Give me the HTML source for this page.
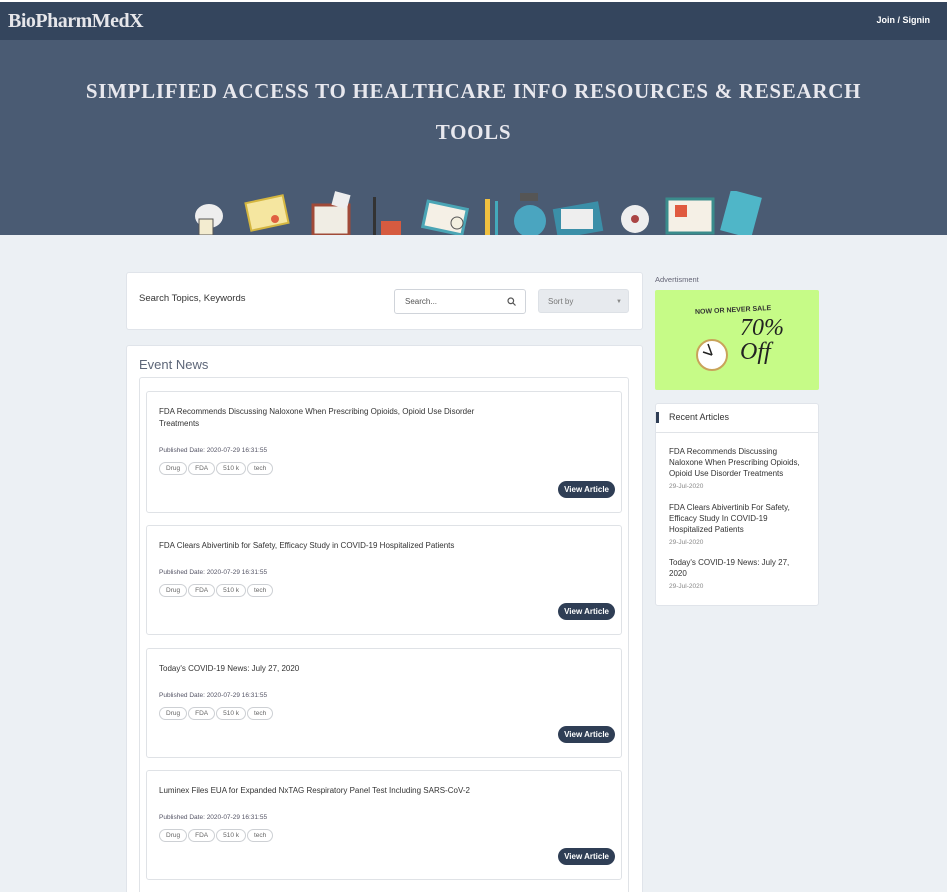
<!DOCTYPE html>
<html><head><meta charset="utf-8"><style>
*{box-sizing:border-box;margin:0;padding:0}
html,body{width:947px;height:892px;overflow:hidden}
body{background:#ecf0f4;font-family:"Liberation Sans",sans-serif;position:relative}
.top{position:absolute;left:0;top:0;width:947px;height:2px;background:#fff}
.nav{position:absolute;left:0;top:2px;width:947px;height:38px;background:#34455d}
.logo{position:absolute;left:8px;top:8px;font-family:"Liberation Serif",serif;font-size:20px;font-weight:bold;color:#e6e6ea;letter-spacing:-0.5px}
.join{position:absolute;right:17px;top:13px;font-size:9px;font-weight:bold;color:#fff}
.hero{position:absolute;left:0;top:40px;width:947px;height:195px;background:#4a5b73}
.ht{position:absolute;left:0;width:947px;text-align:center;font-family:"Liberation Serif",serif;font-weight:bold;font-size:21px;color:#e8e8ee;letter-spacing:0.7px}
.card{position:absolute;background:#fff;border:1px solid #e0e4ea;border-radius:3px}
.sbox{position:absolute;left:394px;top:289px;width:132px;height:25px;border:1px solid #d0d4da;border-radius:3px;background:#fff;font-size:8px;color:#555;padding:7px 10px;line-height:9px}
.sort{position:absolute;left:538px;top:289px;width:91px;height:24px;background:#e7eaee;border:1px solid #dde1e6;border-radius:3px;font-size:8px;color:#777;padding:7px 9px;line-height:9px}
.item{position:absolute;left:146px;width:476px;border:1px solid #dfe2e6;border-radius:3px;background:#fff}
.it{position:absolute;left:12px;top:14px;font-size:8px;color:#333;line-height:12px;width:340px}
.pd{position:absolute;left:12px;font-size:6.5px;color:#556;line-height:8px}
.tags{position:absolute;left:12px;line-height:0}
.tag{display:inline-block;height:13px;border:1px solid #cdd0d4;border-radius:7px;font-size:6.5px;color:#666;padding:0 6px;margin-right:1px;line-height:11px}
.btn{position:absolute;right:6px;background:#2f3e55;color:#fff;font-size:8px;font-weight:bold;border-radius:9px;padding:0 6px;height:17px;line-height:17px}
.ra{position:absolute;left:669px;font-size:8px;color:#333;line-height:11px;width:140px}
.rd{font-size:6.5px;color:#888;margin-top:3px;line-height:9px}
</style></head><body>
<div class="top"></div>
<div class="nav"><div class="logo">BioPharmMedX</div><div class="join">Join / Signin</div></div>
<div class="hero">
<div class="ht" style="top:39px">SIMPLIFIED ACCESS TO HEALTHCARE INFO RESOURCES &amp; RESEARCH</div>
<div class="ht" style="top:80px">TOOLS</div>
<svg style="position:absolute;left:185px;top:151px" width="580" height="44">
<ellipse cx="24" cy="25" rx="14" ry="12" fill="#eee"/><rect x="14" y="28" width="14" height="16" fill="#f3ecd0" stroke="#555"/>
<rect x="63" y="8" width="38" height="28" fill="#f5e6a0" stroke="#d4b640" stroke-width="2" transform="rotate(-12 82 22)"/><circle cx="90" cy="28" r="4" fill="#e06040"/>
<rect x="128" y="14" width="36" height="30" fill="#f0ede4" stroke="#a04a38" stroke-width="3"/><rect x="148" y="2" width="16" height="14" fill="#eee" transform="rotate(15 156 9)"/>
<rect x="196" y="30" width="20" height="14" fill="#d65b40"/><rect x="188" y="6" width="3" height="38" fill="#333"/>
<rect x="240" y="14" width="40" height="26" fill="#f5f0e6" stroke="#4aa5b5" stroke-width="3" transform="rotate(12 260 27)"/><circle cx="272" cy="32" r="6" fill="#f4f0e0" stroke="#555"/>
<rect x="300" y="8" width="5" height="36" fill="#f0c040"/><rect x="310" y="10" width="3" height="34" fill="#4ab"/>
<circle cx="345" cy="30" r="16" fill="#4aa5c0"/><rect x="335" y="2" width="18" height="8" fill="#555"/>
<rect x="370" y="14" width="46" height="30" fill="#3b8fa8" transform="rotate(-10 393 29)"/><rect x="376" y="18" width="32" height="20" fill="#eee"/>
<circle cx="450" cy="28" r="14" fill="#eee"/><circle cx="450" cy="28" r="4" fill="#a44"/>
<rect x="482" y="8" width="46" height="34" fill="#f5f0e6" stroke="#3a8c8c" stroke-width="3"/><rect x="490" y="14" width="12" height="12" fill="#e05a40"/>
<rect x="540" y="2" width="32" height="42" fill="#4fb6c8" transform="rotate(15 556 23)"/>
</svg>
</div>

<div class="card" style="left:126px;top:272px;width:517px;height:58px"></div>
<div style="position:absolute;left:139px;top:293px;font-size:9.5px;color:#333">Search Topics, Keywords</div>
<div class="sbox">Search...<svg style="position:absolute;right:9px;top:7px" width="9" height="9"><circle cx="3.8" cy="3.8" r="2.8" fill="none" stroke="#555" stroke-width="1.2"/><line x1="6" y1="6" x2="8.5" y2="8.5" stroke="#555" stroke-width="1.2"/></svg></div>
<div class="sort">Sort by<span style="position:absolute;right:6px;top:8px;font-size:6px;color:#888">▼</span></div>

<div class="card" style="left:126px;top:345px;width:517px;height:560px"></div>
<div style="position:absolute;left:139px;top:357px;font-size:13px;color:#5d6678">Event News</div>
<div style="position:absolute;left:139px;top:377px;width:490px;height:530px;border:1px solid #e0e3e7;border-radius:3px"></div>

<div class="item" style="top:391px;height:122px"><div class="it">FDA Recommends Discussing Naloxone When Prescribing Opioids, Opioid Use Disorder Treatments</div><div class="pd" style="top:55px">Published Date: 2020-07-29 16:31:55</div><div class="tags" style="top:70px"><span class="tag">Drug</span><span class="tag">FDA</span><span class="tag">510 k</span><span class="tag">tech</span></div><div class="btn" style="top:89px">View Article</div></div>
<div class="item" style="top:525px;height:110px"><div class="it">FDA Clears Abivertinib for Safety, Efficacy Study in COVID-19 Hospitalized Patients</div><div class="pd" style="top:43px">Published Date: 2020-07-29 16:31:55</div><div class="tags" style="top:58px"><span class="tag">Drug</span><span class="tag">FDA</span><span class="tag">510 k</span><span class="tag">tech</span></div><div class="btn" style="top:77px">View Article</div></div>
<div class="item" style="top:648px;height:110px"><div class="it">Today's COVID-19 News: July 27, 2020</div><div class="pd" style="top:43px">Published Date: 2020-07-29 16:31:55</div><div class="tags" style="top:58px"><span class="tag">Drug</span><span class="tag">FDA</span><span class="tag">510 k</span><span class="tag">tech</span></div><div class="btn" style="top:77px">View Article</div></div>
<div class="item" style="top:770px;height:110px"><div class="it">Luminex Files EUA for Expanded NxTAG Respiratory Panel Test Including SARS-CoV-2</div><div class="pd" style="top:43px">Published Date: 2020-07-29 16:31:55</div><div class="tags" style="top:58px"><span class="tag">Drug</span><span class="tag">FDA</span><span class="tag">510 k</span><span class="tag">tech</span></div><div class="btn" style="top:77px">View Article</div></div>

<div style="position:absolute;left:655px;top:275px;font-size:7.5px;color:#667">Advertisment</div>
<div style="position:absolute;left:655px;top:290px;width:164px;height:100px;background:#c6fb87;border-radius:2px">
<div style="position:absolute;left:40px;top:17px;font-size:7px;font-weight:bold;color:#333;transform:rotate(-3deg)">NOW OR NEVER SALE</div>
<div style="position:absolute;left:85px;top:26px;font-family:'Liberation Serif',serif;font-style:italic;font-size:24px;color:#222;line-height:24px">70%<br>Off</div>
<svg style="position:absolute;left:40px;top:48px" width="36" height="36"><circle cx="17" cy="17" r="15" fill="#fff" stroke="#c9a35a" stroke-width="2"/><line x1="17" y1="17" x2="8" y2="14" stroke="#222" stroke-width="1.5"/><line x1="17" y1="17" x2="13" y2="6" stroke="#222" stroke-width="1.5"/></svg>
</div>

<div class="card" style="left:655px;top:403px;width:164px;height:203px"></div>
<div style="position:absolute;left:656px;top:412px;width:3px;height:11px;background:#2f3e55"></div>
<div style="position:absolute;left:669px;top:412px;font-size:9px;color:#333">Recent Articles</div>
<div style="position:absolute;left:656px;top:432px;width:162px;height:1px;background:#e0e3e7"></div>
<div class="ra" style="top:446px">FDA Recommends Discussing Naloxone When Prescribing Opioids, Opioid Use Disorder Treatments<div class="rd">29-Jul-2020</div></div>
<div class="ra" style="top:502px">FDA Clears Abivertinib For Safety, Efficacy Study In COVID-19 Hospitalized Patients<div class="rd">29-Jul-2020</div></div>
<div class="ra" style="top:557px">Today's COVID-19 News: July 27, 2020<div class="rd">29-Jul-2020</div></div>
</body></html>
